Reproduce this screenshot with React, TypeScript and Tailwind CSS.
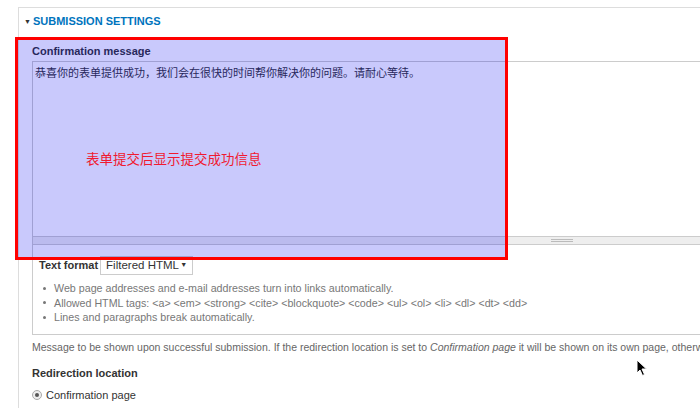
import React from 'react';

const tips = [
  'Web page addresses and e-mail addresses turn into links automatically.',
  'Allowed HTML tags: <a> <em> <strong> <cite> <blockquote> <code> <ul> <ol> <li> <dl> <dt> <dd>',
  'Lines and paragraphs break automatically.',
];

export default function App() {
  return (
    <div className="relative w-[700px] h-[408px] overflow-hidden bg-white text-[#333] font-['Liberation_Sans',Arial,sans-serif]">
      {/* Fieldset */}
      <div className="ml-[18px] mt-[7px] min-h-[420px] border-l border-t border-[#ddd]">
        {/* Legend */}
        <div className="flex items-center pl-[5px] pt-[7px] leading-[13px]">
          <span className="text-[7px] text-[#333] mr-[2px]">▼</span>
          <span className="text-[11px] font-bold text-[#0074bd]">SUBMISSION SETTINGS</span>
        </div>

        <div className="pl-[13px]">
          {/* Confirmation message */}
          <div className="mt-[17px] text-[11px] font-bold leading-[13px]">Confirmation message</div>
          <div className="mt-[3px] w-[1058px] h-[175px] border-t border-l border-[#ccc] bg-white pl-[2px] pt-[4px]">
            <p className="text-[11px] leading-[13px] text-[#333] font-['Noto_Sans_CJK_SC',sans-serif]">
              恭喜你的表单提供成功，我们会在很快的时间帮你解决你的问题。请耐心等待。
            </p>
          </div>
          {/* Grippie */}
          <div className="w-[1058px] h-[9px] flex items-center justify-center bg-[#eee] border-t border-b border-l border-[#ccc]">
            <div className="w-[22px] h-[3px] border-t border-b border-[#bbb]" />
          </div>

          {/* Text format */}
          <div className="w-[1058px] h-[90px] border-l border-b border-[#ccc] pl-[6px] pt-[11px]">
            <div className="flex items-center">
              <span className="text-[11px] font-bold leading-[13px]">Text format</span>
              <div className="ml-[2px] w-[93px] h-[19px] flex items-center border border-[#ccc] pl-[5px] text-[11.5px] text-[#333] whitespace-nowrap">
                <span>Filtered HTML</span>
                <span className="ml-auto mr-[5px] text-[7px]">▼</span>
              </div>
            </div>
            <ul className="mt-[6px]">
              {tips.map((t) => (
                <li key={t} className="flex items-center text-[10.7px] leading-[14.5px] text-[#777]">
                  <span className="ml-[4px] mr-[8px] w-[3px] h-[3px] rounded-full bg-[#777]" />
                  <span className="whitespace-nowrap">{t}</span>
                </li>
              ))}
            </ul>
          </div>

          <p className="mt-[5px] text-[10.5px] leading-[14px] text-[#666] whitespace-nowrap">
            Message to be shown upon successful submission. If the redirection location is set to{' '}
            <em>Confirmation page</em> it will be shown on its own page, otherwise it will be displayed as a message.
          </p>

          <div className="mt-[13px] text-[11px] font-bold leading-[13px]">Redirection location</div>
          <div className="mt-[8px] flex items-center leading-[14px]">
            <span className="w-[10px] h-[10px] rounded-full border border-[#aaa] bg-[#eee] flex items-center justify-center">
              <span className="w-[4px] h-[4px] rounded-full bg-[#555]" />
            </span>
            <span className="ml-[4px] text-[11px] text-[#333]">Confirmation page</span>
          </div>
        </div>
      </div>

      {/* Annotation overlay */}
      <div className="absolute left-[15px] top-[37px] w-[493px] h-[223px] border-[3px] border-[#ff0000] bg-[rgba(0,0,240,0.21)]">
        <span className="absolute left-[68px] top-[110px] text-[13.5px] leading-[16px] text-[#f01a30] font-['Noto_Sans_CJK_SC',sans-serif]">
          表单提交后显示提交成功信息
        </span>
      </div>

      {/* Mouse pointer */}
      <svg className="absolute left-[636px] top-[359px]" width="12" height="18" viewBox="0 0 12 18">
        <path d="M1 1 L1 14 L4 11 L6.5 16.5 L8.5 15.5 L6 10 L10.5 10 Z" fill="#000" stroke="#fff" strokeWidth="1" />
      </svg>
    </div>
  );
}
